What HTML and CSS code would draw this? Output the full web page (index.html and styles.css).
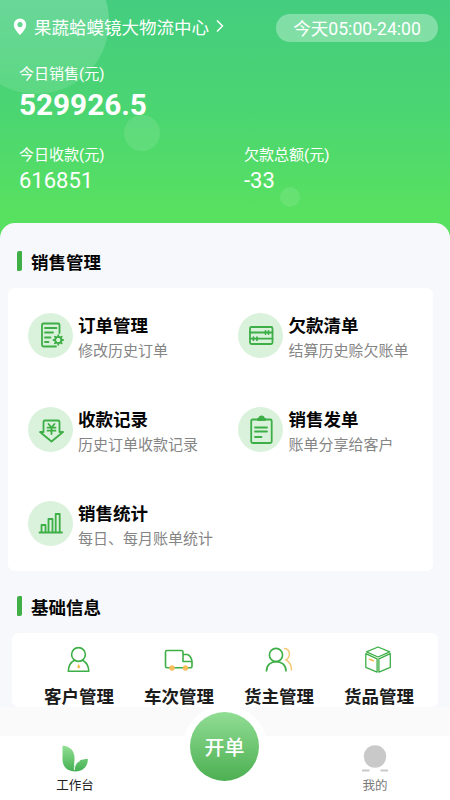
FILE: index.html
```html
<!DOCTYPE html>
<html lang="zh-CN">
<head>
<meta charset="utf-8">
<title>工作台</title>
<link rel="stylesheet" href="styles.css">
</head>
<body>
<div class="app">
  <header class="hero">
    <i class="bubble bubble-large"></i><i class="bubble bubble-medium"></i><i class="bubble bubble-small"></i>
    <div class="topbar">
      <svg class="pin" width="14" height="18" viewBox="0 0 14 18"><path fill="#fff" fill-rule="evenodd" d="M7 .5A6.2 6.2 0 0 0 .8 6.7C.8 10.8 4.6 14 7 17.3c2.4-3.300 6.200-6.500 6.200-10.600A6.200 6.200 0 0 0 7 .5Zm0 3.500a2.600 2.600 0 1 1 0 5.200A2.600 2.600 0 0 1 7 4Z"/></svg>
      <span class="place">果蔬蛤蟆镜大物流中心</span>
      <svg class="chevron" width="8" height="14" viewBox="0 0 8 14"><path d="M1 1.500 6.500 7 1 12.500" fill="none" stroke="#fff" stroke-width="1.500"/></svg>
      <span class="hours">今天05:00-24:00</span>
    </div>
    <div class="stat sales"><div class="label">今日销售(元)</div><div class="total">529926.5</div></div>
    <div class="stats">
      <div class="stat"><div class="label">今日收款(元)</div><div class="value">616851</div></div>
      <div class="stat"><div class="label">欠款总额(元)</div><div class="value">-33</div></div>
    </div>
  </header>

  <main class="content">
    <h2 class="section-title"><span>销售管理</span></h2>
    <section class="card services">
      <div class="service">
        <svg class="badge" viewBox="0 0 45 45"><g class="line"><path d="M31.500 20v-8a1.500 1.500 0 0 0-1.500-1.500H15.500A1.500 1.500 0 0 0 14 12v20a1.500 1.500 0 0 0 1.500 1.500H28"/><path d="M17 15h11.500M17 19.500h8M17 24.500h5.500M17 29h3.500"/><circle cx="30.300" cy="27" r="3.100"/><path d="M30.300 22.200v1.700m0 6.200v1.700m-4.800-4.800h1.700m6.200 0h1.700m-8.200-3.400 1.200 1.200m4.400 4.400 1.200 1.200m0-6.800-1.200 1.200m-4.400 4.400-1.200 1.200"/></g></svg>
        <div><h3>订单管理</h3><p>修改历史订单</p></div>
      </div>
      <div class="service">
        <svg class="badge" viewBox="0 0 45 45"><g class="line"><rect x="12" y="14" width="22.500" height="17" rx="1.500"/><path d="M12 19.500h22.500M12 25.700h22.500M27.500 18v3M30.500 18v3M15.500 24.200v3M19 24.200v3"/></g></svg>
        <div><h3>欠款清单</h3><p>结算历史赊欠账单</p></div>
      </div>
      <div class="service">
        <svg class="badge" viewBox="0 0 45 45"><g class="line"><path d="M17 13.500h13a1.500 1.500 0 0 1 1.500 1.500v10H35L23.500 34.500 12 25h3.500V15a1.500 1.500 0 0 1 1.500-1.500Z"/><path d="m20.500 17 3 3.500 3-3.500M19.500 20.700h8M19.500 23.700h8M23.500 20.500V27"/></g></svg>
        <div><h3>收款记录</h3><p>历史订单收款记录</p></div>
      </div>
      <div class="service">
        <svg class="badge" viewBox="0 0 45 45"><g class="line"><rect x="13.200" y="12.500" width="20.500" height="23.500" rx="1.500"/><path d="M17 20.500h12M17 24.500h12M17 30h6.500"/><path class="solid" d="M20 13v-1.200l1.300-.3a2.200 2.200 0 0 1 4.400 0l1.300.3V13Z"/></g></svg>
        <div><h3>销售发单</h3><p>账单分享给客户</p></div>
      </div>
      <div class="service">
        <svg class="badge" viewBox="0 0 45 45"><g class="line"><path d="M11.500 31.500h22.500M13.500 31v-7h4v7M20.500 31V18h4v13M27.700 31V13h4v18"/></g></svg>
        <div><h3>销售统计</h3><p>每日、每月账单统计</p></div>
      </div>
    </section>

    <h2 class="section-title second"><span>基础信息</span></h2>
    <section class="card shortcuts">
      <div class="shortcut">
        <svg width="30" height="30" viewBox="0 0 30 30"><g class="line thin"><circle cx="14.500" cy="9.500" r="6.900"/><path d="M10.500 15.300C6.500 17.500 4.300 21 4.300 26.300h20.500c0-5.300-2.300-8.800-6.300-11"/></g><path fill="#f6bd50" d="M14.700 18.700 13 22.300l1.700 1.300 1.700-1.300Z"/></svg>
        <span>客户管理</span>
      </div>
      <div class="shortcut">
        <svg width="30" height="30" viewBox="0 0 30 30"><g class="line thin"><path d="M7 22.800H3A1.500 1.500 0 0 1 1.500 21.300V7A1.500 1.500 0 0 1 3 5.500h14.500A1.500 1.500 0 0 1 19 7v9.500h9v4.800a1.500 1.500 0 0 1-1.500 1.500h-16M19.500 9.500h4q4 2 4.500 7"/></g><g fill="#f9bd5c"><circle cx="8" cy="23" r="2.700"/><circle cx="21.500" cy="23" r="2.700"/></g></svg>
        <span>车次管理</span>
      </div>
      <div class="shortcut">
        <svg width="30" height="30" viewBox="0 0 30 30"><path d="M20 3.500c6 0 7.500 8 2 11.500 3.500 1.800 5.500 6 5.500 10.500" fill="none" stroke="#f4ca78" stroke-width="1.500"/><g class="line thin"><circle cx="12" cy="10" r="6.600"/><path d="M2.500 26c0-12.500 19.500-12.500 19.500 0"/></g></svg>
        <span>货主管理</span>
      </div>
      <div class="shortcut">
        <svg width="30" height="30" viewBox="0 0 30 30"><g class="line thin box"><path d="M14 2 25.800 6.800 14 12 2.500 6.800ZM1.800 8.700l11.300 5.200v13.200L1.800 22.300ZM26.300 8.700l-11.400 5.200v13.200l11.400-4.800Z"/></g><path d="m5 14 5 2" stroke="#f6bd50" stroke-width="1.800"/></svg>
        <span>货品管理</span>
      </div>
    </section>
  </main>

  <nav class="tabs">
    <div class="tab active">
      <svg width="28" height="28" viewBox="0 0 28 28"><defs><linearGradient id="leaf" x2="0" y2="1"><stop stop-color="#91df93"/><stop offset="1" stop-color="#45b052"/></linearGradient></defs><path fill="url(#leaf)" d="M1.500.8c8 .4 12.500 5.500 12 13.500l-.7 9.500c1-6.200 5.200-9.600 14-9.800.3 7-4.800 12.500-12.300 12.500-8 0-13-4.700-13-12Z"/><path d="M13.300 25c.1-5 2.400-8 5.700-9.300" fill="none" stroke="#fff" stroke-width=".9"/></svg>
      <span>工作台</span>
    </div>
    <div class="create"><span>开单</span></div>
    <div class="tab">
      <svg width="28" height="28" viewBox="0 0 28 28"><circle cx="14" cy="11.500" r="11.200" fill="#c9c9c9"/><path d="M1 25.500h7.500M19.500 25.500H27" stroke="#c9c9c9" stroke-width="2"/></svg>
      <span>我的</span>
    </div>
  </nav>
</div>
</body>
</html>
```
FILE: styles.css
```css
* { box-sizing: border-box; }
body { margin: 0; font-family: Roboto, "Noto Sans CJK SC", sans-serif; color: #050505; }
h2, h3, p { margin: 0; }
svg { display: block; flex: none; }
.app { display: flex; flex-direction: column; width: 450px; height: 800px; overflow: hidden; background: #fff; }

.hero { position: relative; flex: none; height: 243px; padding: 14px 12px 0 13px; overflow: hidden; color: #fff; background: linear-gradient(#44cd7f, #4bd572 45%, #58e160 88%, #58e160); }
.hero > div { position: relative; }
.bubble { position: absolute; border-radius: 50%; background: rgba(255, 255, 255, .1); }
.bubble-large { left: -36px; top: -51px; width: 145px; height: 145px; background: linear-gradient(rgba(255, 255, 255, .2) 35%, rgba(255, 255, 255, .1)); }
.bubble-medium { left: 124px; top: 115px; width: 36px; height: 36px; }
.bubble-small { left: 280px; top: 187px; width: 20px; height: 20px; }

.topbar { display: flex; align-items: center; height: 28px; }
.pin { margin: -3px 7px 0 0; }
.place { font-size: 17.5px; line-height: 26px; margin-right: 7px; }
.chevron { margin-top: -4px; }
.hours { margin-left: auto; width: 162px; height: 28px; border-radius: 14px; background: rgba(255, 255, 255, .32); font-size: 17.6px; line-height: 31px; text-align: center; }
.stat { padding-left: 6px; }
.label { font-size: 15px; line-height: 22px; }
.sales { margin-top: 21px; }
.total { font-size: 29.7px; font-weight: 700; line-height: 36px; margin-top: 2px; }
.stats { display: grid; grid-template-columns: 225px 1fr; margin-top: 21px; }
.value { font-size: 22px; line-height: 26px; margin-top: 2px; }

.content { position: relative; flex: none; height: 484px; margin-top: -20px; padding-top: 28px; border-radius: 15px 15px 0 0; background: #f7f8fb; overflow: hidden; }
.section-title { display: flex; align-items: center; gap: 9px; height: 20px; margin-left: 17px; font-size: 17.5px; font-weight: 700; line-height: 20px; }
.section-title::before { content: ""; width: 5px; height: 20px; border-radius: 2px 1px; background: #40af45; }
.section-title span { padding-top: 3px; }
.second { margin-top: 25px; }
.card { background: #fff; border-radius: 7px; }
.services { display: grid; grid-template-columns: repeat(2, 210.5px); grid-auto-rows: 94px; width: 425px; height: 283px; margin: 17px 0 0 8px; }
.service { display: flex; gap: 5.5px; padding: 25px 0 0 19.5px; }
.badge { width: 45px; height: 45px; border-radius: 50%; background: #daf2dc; }
.line { fill: none; stroke: #3eae46; stroke-width: 1.8; stroke-linecap: round; stroke-linejoin: round; }
.thin { stroke-width: 1.6; }
.box { stroke-width: 1.3; }
.solid { fill: #3eae46; }
.service h3 { font-size: 17.5px; font-weight: 700; line-height: 24px; padding-top: 1px; }
.service p { font-size: 15px; line-height: 24px; padding-top: 1px; color: #858585; white-space: nowrap; }
.shortcuts { display: grid; grid-template-columns: repeat(4, 100px); width: 426px; height: 74px; margin: 17px 0 0 12px; padding-left: 17px; }
.shortcut { display: flex; flex-direction: column; align-items: center; padding-top: 12px; font-size: 17.5px; font-weight: 700; line-height: 26px; color: #1c1c1c; }
.shortcut span { margin-top: 9px; }

.tabs { position: relative; flex: none; height: 93px; padding-top: 29px; display: grid; grid-template-columns: repeat(3, 150px); background: linear-gradient(#fafafa 29px, #fff 29px); }
.tab { display: flex; flex-direction: column; align-items: center; padding-top: 9px; font-size: 12.5px; line-height: 18px; color: #777; }
.tab span { margin-top: 4px; }
.active { color: #222; }
.create { width: 84px; height: 84px; margin: -31px auto 0; border-radius: 50%; background: #fff; display: grid; place-items: center; }
.create span { width: 69px; height: 69px; margin: -1px 1px 0 0; border-radius: 50%; background: linear-gradient(#91dd95, #4caf51); color: #fff; font-size: 20px; font-weight: 500; line-height: 72px; text-align: center; }
```
